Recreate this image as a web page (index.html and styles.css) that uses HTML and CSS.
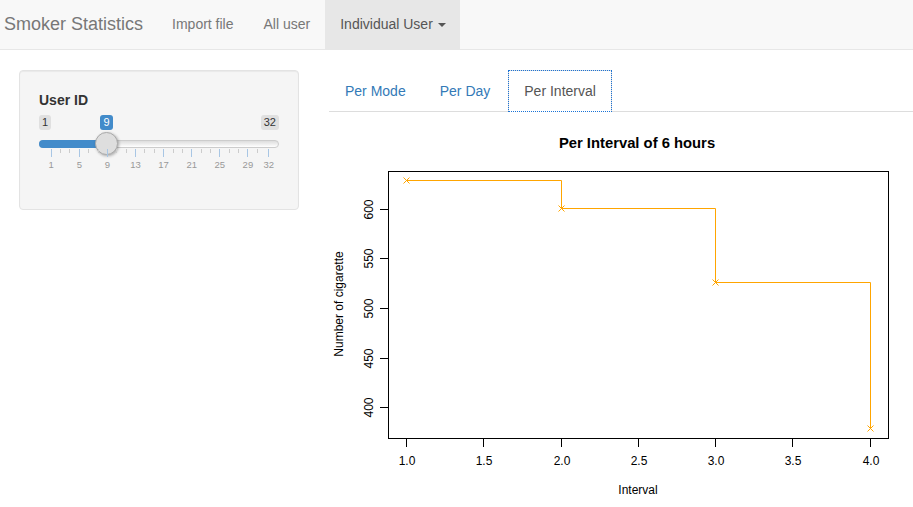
FILE: index.html
```html
<!DOCTYPE html>
<html>
<head>
<meta charset="utf-8">
<title>Smoker Statistics</title>
<link rel="stylesheet" href="styles.css">
</head>
<body>
<nav class="navbar">
  <span class="brand">Smoker Statistics</span>
  <a class="nav-link">Import file</a>
  <a class="nav-link">All user</a>
  <a class="nav-link active">Individual User <span class="caret"></span></a>
</nav>
<div class="main">
  <div class="sidebar">
    <div class="well">
      <label class="control-label">User ID</label>
      <div class="slider">
        <span class="sl-min">1</span>
        <span class="sl-from" style="left:61px">9</span>
        <span class="sl-max">32</span>
        <div class="sl-line"></div>
        <div class="sl-bar" style="width:68px"></div>
        <div class="sl-handle" style="left:56px"></div>
        <div class="sl-grid">
          <span class="tick big" style="left:11.7px"></span>
          <span class="tick" style="left:21.1px"></span>
          <span class="tick" style="left:30.4px"></span>
          <span class="tick big" style="left:39.8px"></span>
          <span class="tick" style="left:49.2px"></span>
          <span class="tick" style="left:58.5px"></span>
          <span class="tick big" style="left:67.9px"></span>
          <span class="tick" style="left:77.3px"></span>
          <span class="tick" style="left:86.6px"></span>
          <span class="tick big" style="left:96.0px"></span>
          <span class="tick" style="left:105.4px"></span>
          <span class="tick" style="left:114.7px"></span>
          <span class="tick big" style="left:124.1px"></span>
          <span class="tick" style="left:133.5px"></span>
          <span class="tick" style="left:142.8px"></span>
          <span class="tick big" style="left:152.2px"></span>
          <span class="tick" style="left:161.6px"></span>
          <span class="tick" style="left:170.9px"></span>
          <span class="tick big" style="left:180.3px"></span>
          <span class="tick" style="left:189.7px"></span>
          <span class="tick" style="left:199.0px"></span>
          <span class="tick big" style="left:208.4px"></span>
          <span class="tick" style="left:217.8px"></span>
          <span class="tick big" style="left:229.3px"></span>
          <span class="glabel" style="left:11.7px">1</span>
          <span class="glabel" style="left:39.8px">5</span>
          <span class="glabel" style="left:67.9px">9</span>
          <span class="glabel" style="left:96.0px">13</span>
          <span class="glabel" style="left:124.1px">17</span>
          <span class="glabel" style="left:152.2px">21</span>
          <span class="glabel" style="left:180.3px">25</span>
          <span class="glabel" style="left:208.4px">29</span>
          <span class="glabel" style="left:229.3px">32</span>
        </div>
      </div>
    </div>
  </div>
  <div class="content">
    <ul class="tabs">
      <li><a>Per Mode</a></li>
      <li><a>Per Day</a></li>
      <li class="active"><a>Per Interval</a></li>
    </ul>
    <svg class="plot" width="584" height="394" viewBox="0 0 584 394" xmlns="http://www.w3.org/2000/svg">
      <g font-family="Liberation Sans, Arial, sans-serif" fill="#000">
        <text x="308" y="35" font-size="14.8" font-weight="bold" text-anchor="middle">Per Interval of 6 hours</text>
        <text x="309" y="381" font-size="12" text-anchor="middle">Interval</text>
        <text transform="translate(13.5 191) rotate(-90)" font-size="12" text-anchor="middle">Number of cigarette</text>
      </g>
      <rect x="59.5" y="58.5" width="500" height="267" fill="none" stroke="#000" stroke-width="1"/>
      <g stroke="#000" stroke-width="1">
        <line x1="77.5" y1="325.5" x2="77.5" y2="334"/>
        <line x1="154.5" y1="325.5" x2="154.5" y2="334"/>
        <line x1="232.5" y1="325.5" x2="232.5" y2="334"/>
        <line x1="309.5" y1="325.5" x2="309.5" y2="334"/>
        <line x1="386.5" y1="325.5" x2="386.5" y2="334"/>
        <line x1="463.5" y1="325.5" x2="463.5" y2="334"/>
        <line x1="541.5" y1="325.5" x2="541.5" y2="334"/>
        <line x1="59.5" y1="96.5" x2="51" y2="96.5"/>
        <line x1="59.5" y1="145.5" x2="51" y2="145.5"/>
        <line x1="59.5" y1="195.5" x2="51" y2="195.5"/>
        <line x1="59.5" y1="245.5" x2="51" y2="245.5"/>
        <line x1="59.5" y1="294.5" x2="51" y2="294.5"/>
      </g>
      <g font-family="Liberation Sans, Arial, sans-serif" font-size="12" fill="#000" text-anchor="middle">
        <text x="78" y="352">1.0</text>
        <text x="155" y="352">1.5</text>
        <text x="233" y="352">2.0</text>
        <text x="310" y="352">2.5</text>
        <text x="387" y="352">3.0</text>
        <text x="464" y="352">3.5</text>
        <text x="542" y="352">4.0</text>
        <text transform="translate(44 96.5) rotate(-90)">600</text>
        <text transform="translate(44 145.5) rotate(-90)">550</text>
        <text transform="translate(44 195.5) rotate(-90)">500</text>
        <text transform="translate(44 245.5) rotate(-90)">450</text>
        <text transform="translate(44 294.5) rotate(-90)">400</text>
      </g>
      <path d="M77.5 67.5 H232.5 V95.5 H386.5 V169.5 H541.5 V315.5" fill="none" stroke="#FFA500" stroke-width="1"/>
      <g stroke="#FFA500" stroke-width="1">
        <path d="M74.5 64.5 L80.5 70.5 M80.5 64.5 L74.5 70.5"/>
        <path d="M229.5 92.5 L235.5 98.5 M235.5 92.5 L229.5 98.5"/>
        <path d="M383.5 166.5 L389.5 172.5 M389.5 166.5 L383.5 172.5"/>
        <path d="M538.5 312.5 L544.5 318.5 M544.5 312.5 L538.5 318.5"/>
      </g>
    </svg>
  </div>
</div>
</body>
</html>
```

FILE: styles.css
```css
* { box-sizing: border-box; }
html, body { margin: 0; padding: 0; background: #fff; }
body {
  font-family: "Liberation Sans", Arial, Helvetica, sans-serif;
  font-size: 14px;
  line-height: 20px;
  color: #333;
  width: 913px;
  height: 507px;
  overflow: hidden;
}

.navbar {
  display: flex;
  align-items: stretch;
  height: 50px;
  background: #f8f8f8;
  border-bottom: 1px solid #e7e7e7;
}
.brand {
  padding: 0 14px 0 4px;
  font-size: 18px;
  line-height: 49px;
  color: #777;
}
.nav-link {
  padding: 0 15px;
  line-height: 49px;
  color: #777;
}
.nav-link.active {
  padding: 0 14px 0 15px;
  background: #e7e7e7;
  color: #555;
}
.caret {
  display: inline-block;
  width: 0;
  height: 0;
  margin-left: 1px;
  vertical-align: middle;
  border-top: 4px solid #555;
  border-left: 4px solid transparent;
  border-right: 4px solid transparent;
}

.main {
  display: flex;
  padding-top: 20px;
}
.sidebar {
  margin-left: 19px;
  width: 280px;
  flex: none;
}
.well {
  height: 140px;
  padding: 19px;
  background: #f5f5f5;
  border: 1px solid #e3e3e3;
  border-radius: 4px;
  box-shadow: inset 0 1px 1px rgba(0,0,0,.05);
}
.control-label {
  display: block;
  font-weight: bold;
  font-size: 14px;
  line-height: 20px;
  margin-bottom: 5px;
  color: #333;
}
.slider {
  position: relative;
  height: 60px;
}
.sl-min, .sl-max, .sl-from {
  position: absolute;
  top: 0;
  height: 15px;
  padding: 0 3px;
  font-size: 11px;
  line-height: 15px;
  border-radius: 3px;
  background: #e1e4e9;
  color: #333;
}
.sl-min { left: 0; background: #e0e0e0; }
.sl-max { right: 0; background: #e0e0e0; }
.sl-from {
  background: #428bca;
  color: #fff;
  min-width: 13px;
  text-align: center;
}
.sl-line {
  position: absolute;
  left: 0;
  right: 0;
  top: 25px;
  height: 8px;
  border: 1px solid #cccccc;
  border-radius: 4px;
  background: linear-gradient(#dddddd, #ffffff);
}
.sl-bar {
  position: absolute;
  left: 0;
  top: 25px;
  height: 8px;
  border-radius: 4px 0 0 4px;
  background: #428bca;
}
.sl-handle {
  position: absolute;
  top: 17px;
  width: 23px;
  height: 23px;
  border-radius: 50%;
  border: 1px solid #aaaaaa;
  background: #dedede;
  box-shadow: 1px 1px 3px rgba(0,0,0,.3);
}
.sl-grid {
  position: absolute;
  left: 0;
  right: 0;
  top: 34px;
  height: 20px;
}
.tick {
  position: absolute;
  top: 0;
  width: 1px;
  height: 4px;
  background: #cccccc;
}
.tick.big {
  height: 8px;
  background: #a8c6e4;
}
.glabel {
  position: absolute;
  top: 10px;
  width: 20px;
  margin-left: -9.5px;
  text-align: center;
  font-size: 9.5px;
  line-height: 12px;
  color: #999;
}

.content {
  margin-left: 30px;
  flex: 1;
  min-width: 0;
}
.tabs {
  display: flex;
  list-style: none;
  margin: 0;
  padding: 0;
  border-bottom: 1px solid #ddd;
}
.tabs li { margin-bottom: -1px; }
.tabs a {
  display: block;
  margin-right: 2px;
  padding: 10px 15px;
  line-height: 20px;
  font-size: 14px;
  color: #337ab7;
  border: 1px solid transparent;
  border-radius: 4px 4px 0 0;
}
.tabs li.active a {
  color: #555;
  background: #fff;
  border-color: #ddd #ddd transparent;
  border-radius: 0;
  outline: 1px dotted #1a73d6;
  outline-offset: -1px;
}
.plot {
  display: block;
  margin-top: 1px;
}
```
